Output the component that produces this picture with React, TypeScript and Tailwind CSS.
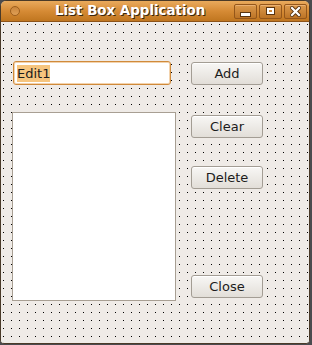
import React from 'react'

const font = { fontFamily: '"DejaVu Sans", "Liberation Sans", sans-serif' }

function Btn({ label, className = '' }: { label: string; className?: string }) {
  return (
    <button
      className={`w-[72px] h-[23px] flex items-center justify-center rounded-[3px] border border-[#a39d94] bg-gradient-to-b from-[#f8f7f5] to-[#e2ded8] text-[13px] text-[#1c1c1c] shadow-[inset_0_1px_0_#ffffff] ${className}`}
    >
      {label}
    </button>
  )
}

function TitleButton({ children }: { children: React.ReactNode }) {
  return (
    <div className="w-[23px] h-[15px] rounded-[2px] border border-[#94561a] bg-gradient-to-b from-[#dc9a4c] to-[#bd7425] shadow-[inset_0_1px_0_#eab071] flex items-center justify-center">
      {children}
    </div>
  )
}

export default function App() {
  return (
    <div className="w-[312px] h-[345px] bg-[#4b4b4f]" style={font}>
      <div className="w-[310px] h-[344px] flex flex-col rounded-t-[6px] rounded-b-[4px] overflow-hidden border border-[#4a3a28] bg-[#efebe7]">
        {/* Title bar */}
        <div className="h-[21px] shrink-0 flex items-center bg-gradient-to-b from-[#e9aa5c] via-[#d68b35] to-[#c0761f] border-b border-[#8e5418]">
          <div className="ml-[9px] w-[10px] h-[10px] rounded-full border border-[#9c5e1e] bg-gradient-to-b from-[#c9843a] to-[#e0a056]" />
          <div className="ml-[35px] text-[13.4px] font-bold text-white leading-none [text-shadow:1px_1px_0_#3b2610]">
            List Box Application
          </div>
          <div className="ml-auto mr-[2px] flex gap-[2px]">
            <TitleButton>
              <div className="mt-[6px] w-[9px] h-[3px] bg-white border border-[#5a3410] box-content" />
            </TitleButton>
            <TitleButton>
              <div className="w-[7px] h-[6px] border-2 border-white outline outline-1 outline-[#5a3410]" />
            </TitleButton>
            <TitleButton>
              <svg width="11" height="11" viewBox="0 0 11 11">
                <path d="M2 2 L9 9 M9 2 L2 9" stroke="#5a3410" strokeWidth="4" strokeLinecap="square" />
                <path d="M2 2 L9 9 M9 2 L2 9" stroke="#ffffff" strokeWidth="2.2" strokeLinecap="square" />
              </svg>
            </TitleButton>
          </div>
        </div>

        {/* Content with dot grid */}
        <div className="flex-1 flex bg-black bg-[linear-gradient(to_right,transparent_1px,#efebe7_1px),linear-gradient(to_bottom,transparent_1px,#efebe7_1px)] bg-size-[8px_8px] bg-position-[2px_2px]">
          <div className="pl-[11px] flex flex-col">
            <div className="ml-[1px] mt-[39px] w-[158px] h-[24px] rounded-[3px] border border-[#d08a3a] bg-white flex items-center pl-[3px] shadow-[inset_0_0_0_1px_#f3d3ad]">
              <span className="bg-[#f6c57e] text-[13px] leading-[17px] text-[#1c1c1c]">Edit1</span>
            </div>
            <div className="mt-[27px] w-[164px] h-[189px] border border-[#a89f93] bg-white" />
          </div>
          <div className="ml-[15px] flex flex-col">
            <Btn label="Add" className="mt-[40px]" />
            <Btn label="Clear" className="mt-[30px]" />
            <Btn label="Delete" className="mt-[28px]" />
            <Btn label="Close" className="mt-[86px]" />
          </div>
        </div>
      </div>
    </div>
  )
}
